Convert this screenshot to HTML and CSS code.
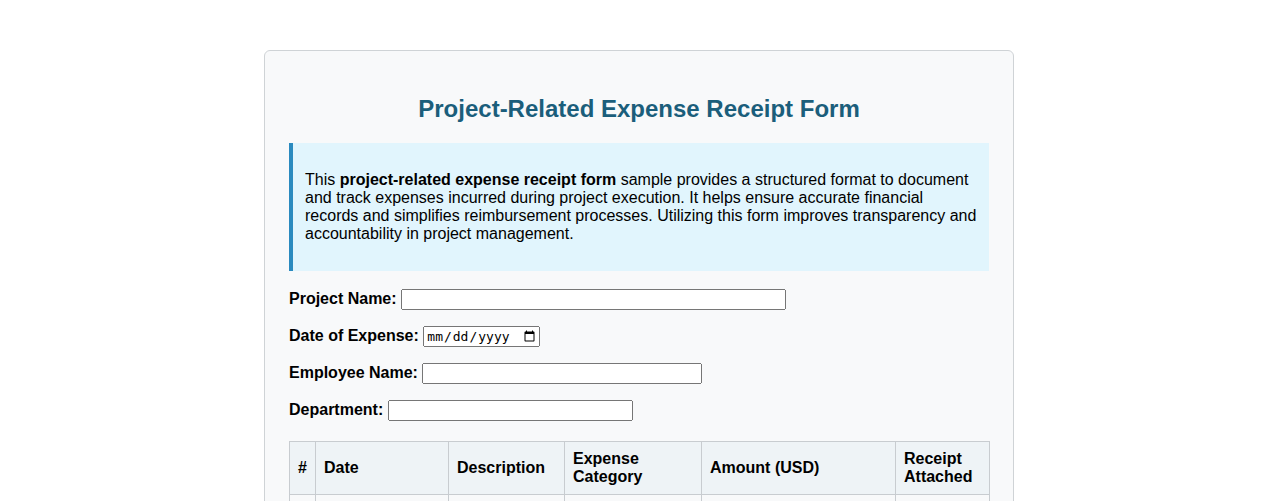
FILE: index.html
```html
<!DOCTYPE html>
<html lang="en">
<head>
<meta charset="utf-8">
<title>Project-Related Expense Receipt Form</title>
<link rel="stylesheet" href="styles.css">
</head>
<body>
<div class="container">
  <h2 class="title">Project-Related Expense Receipt Form</h2>
  <div class="info">
    <p>This <strong>project-related expense receipt form</strong> sample provides a structured format to document and track expenses incurred during project execution. It helps ensure accurate financial records and simplifies reimbursement processes. Utilizing this form improves transparency and accountability in project management.</p>
  </div>
  <form>
    <div class="row"><label>Project Name:</label> <input type="text" class="w55"></div>
    <div class="row"><label>Date of Expense:</label> <input type="date" class="date"></div>
    <div class="row"><label>Employee Name:</label> <input type="text" class="w40"></div>
    <div class="row"><label>Department:</label> <input type="text" class="w35"></div>
    <table class="expenses">
      <colgroup>
        <col class="c1"><col class="c2"><col class="c3"><col class="c4"><col class="c5"><col class="c6">
      </colgroup>
      <thead>
        <tr><th>#</th><th>Date</th><th>Description</th><th>Expense Category</th><th>Amount (USD)</th><th>Receipt Attached</th></tr>
      </thead>
      <tbody>
        <tr><td>1</td><td><input type="date"></td><td><input type="text"></td><td><input type="text"></td><td><input type="number"></td><td><input type="checkbox"></td></tr>
      </tbody>
    </table>
  </form>
</div>
</body>
</html>
```
FILE: styles.css
```css
body {
  margin: 0;
  font-family: "Liberation Sans", Arial, sans-serif;
  font-size: 16px;
  color: #000;
  background: #fff;
}
.container {
  width: 700px;
  margin: 50px auto;
  padding: 24px;
  background: #f8f9fa;
  border: 1px solid #cfd3d6;
  border-radius: 6px;
}
.title {
  text-align: center;
  color: #1b5e7b;
  font-size: 24px;
  margin: 20px 0;
}
.info {
  background: #e1f5fd;
  border-left: 4px solid #2a8abf;
  padding: 12px;
  margin-bottom: 17px;
}
.info p {
  margin: 16px 0;
}
.row {
  display: flex;
  align-items: center;
  gap: 4.5px;
  height: 22px;
  margin-bottom: 15px;
}
.row label {
  font-weight: bold;
}
.row input {
  font-size: 13px;
  height: 21px;
  box-sizing: border-box;
}
.w55 { width: 385px; }
.w40 { width: 280px; }
.w35 { width: 245px; }
.date { width: 117px; }
.expenses {
  width: 100%;
  border-collapse: collapse;
  table-layout: fixed;
  margin-top: 20px;
}
.expenses th, .expenses td {
  border: 1px solid #c8ccd0;
  padding: 8px;
  text-align: left;
}
.expenses th {
  background: #eef3f6;
}
.c1 { width: 26px; }
.c2 { width: 133px; }
.c3 { width: 116px; }
.c4 { width: 137px; }
.c5 { width: 194px; }
.c6 { width: 94px; }
.expenses td input[type="text"], .expenses td input[type="number"], .expenses td input[type="date"] {
  width: 100%;
  box-sizing: border-box;
}
```
